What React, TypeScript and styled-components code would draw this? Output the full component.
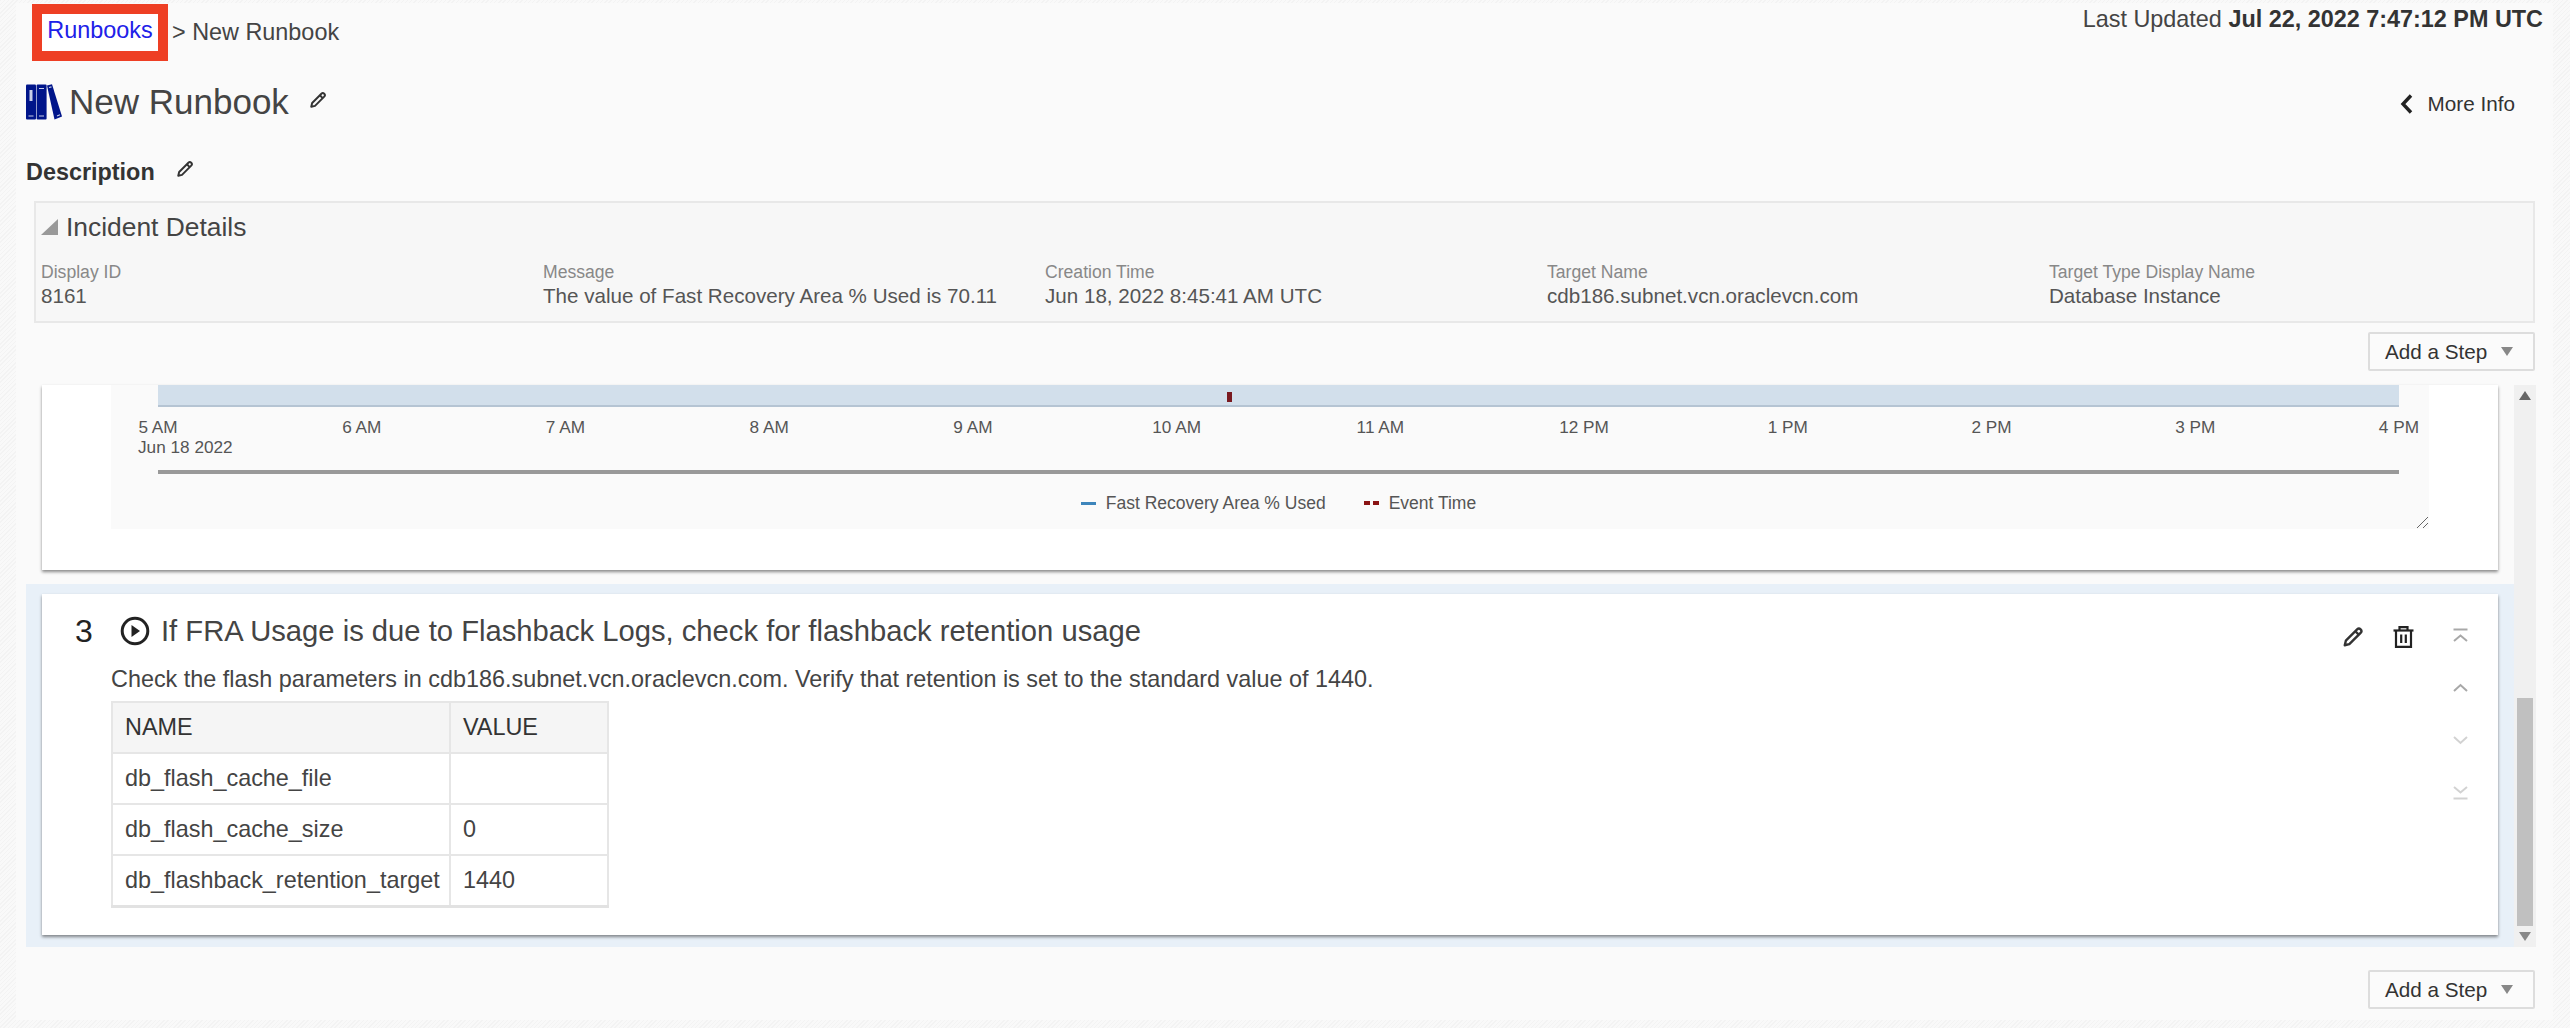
import React from "react";
import styled, { createGlobalStyle } from "styled-components";

const GlobalStyle = createGlobalStyle`
  html, body {
    margin: 0;
    padding: 0;
    background: repeating-linear-gradient(135deg, #f3f3f3 0 1px, #f9f9f9 1px 3px);
    font-family: "Liberation Sans", Arial, sans-serif;
    color: #333;
  }
`;

const Page = styled.div`
  width: 2570px;
  height: 1028px;
  padding: 3px 17px 8px 16px;
  box-sizing: border-box;
  overflow: hidden;
`;

const Frame = styled.div`
  height: 100%;
  box-sizing: border-box;
  background: #fafafa;
  padding: 1px 0 0 10px;
  position: relative;
`;

const TopRow = styled.div`
  display: flex;
  justify-content: space-between;
  align-items: flex-start;
  height: 57px;
  padding-right: 10px;
`;

const Breadcrumb = styled.div`
  display: flex;
  align-items: center;
  height: 57px;
  margin-left: 6px;
  font-size: 23.4px;
  color: #444;
`;

const CrumbBox = styled.div`
  box-sizing: border-box;
  height: 57px;
  width: 136px;
  border: 10px solid #ee3f24;
  background: #fff;
  display: flex;
  align-items: center;
  justify-content: center;
  padding-bottom: 5px;
  margin-right: 4px;
`;

const CrumbLink = styled.a`
  color: #2020e8;
  text-decoration: none;
`;

const Updated = styled.div`
  font-size: 23.4px;
  line-height: 28px;
  margin-top: 1px;
  color: #444;
  b {
    color: #333;
  }
`;

const TitleRow = styled.div`
  display: flex;
  align-items: center;
  justify-content: space-between;
  height: 36px;
  margin-top: 23px;
  padding-right: 38px;
`;

const TitleLeft = styled.div`
  display: flex;
  align-items: center;
`;

const Title = styled.h1`
  margin: 0 0 0 7px;
  font-size: 35px;
  font-weight: 400;
  color: #444;
`;

const TitlePencil = styled.span`
  display: flex;
  margin-left: 20px;
  margin-top: -4px;
`;

const MoreInfo = styled.div`
  display: flex;
  align-items: center;
  gap: 15px;
  margin-top: 4px;
  font-size: 20.7px;
  color: #333;
`;

const DescriptionRow = styled.div`
  display: flex;
  align-items: center;
  height: 30px;
  margin-top: 37px;
`;

const DescriptionLabel = styled.strong`
  font-size: 23.4px;
  color: #333;
`;

const DescriptionPencil = styled.span`
  display: flex;
  margin-left: 21px;
  margin-top: -6px;
`;

const IncidentBox = styled.section`
  box-sizing: border-box;
  height: 122px;
  width: 2501px;
  margin: 14px 0 0 8px;
  background: #f7f7f7;
  border: 2px solid #e8e8e8;
  padding: 0 5px;
`;

const IncidentTitle = styled.div`
  display: flex;
  align-items: center;
  gap: 8px;
  height: 48px;
  font-size: 26.4px;
  color: #444;
`;

const IncidentGrid = styled.div`
  display: grid;
  grid-template-columns: repeat(4, 502px) 1fr;
  margin-top: 10px;
`;

const FieldLabel = styled.div`
  font-size: 17.6px;
  line-height: 23px;
  color: #888;
`;

const FieldValue = styled.div`
  font-size: 20.6px;
  line-height: 23px;
  color: #555;
`;

const ActionRow = styled.div`
  display: flex;
  justify-content: flex-end;
  padding-right: 18px;
  margin-top: ${(p: { $top: number }) => p.$top}px;
`;

const AddButton = styled.button`
  box-sizing: border-box;
  width: 167px;
  height: 39px;
  background: #fbfbfb;
  border: 2px solid #ddd;
  border-radius: 2px;
  font-family: inherit;
  font-size: 20.7px;
  color: #333;
  display: flex;
  align-items: center;
  padding: 0 0 0 15px;
  gap: 14px;
`;

const StepsArea = styled.div`
  display: flex;
  height: 562px;
  margin: 14px 0 0 0;
  width: 2510px;
`;

const StepList = styled.div`
  flex: 1;
  display: flex;
  flex-direction: column;
`;

const ChartSlot = styled.div`
  padding: 0 16px 0 16px;
  margin-bottom: 14px;
`;

const Card = styled.article`
  background: #fff;
  box-shadow: 0 2px 3px rgba(0, 0, 0, 0.45);
  box-sizing: border-box;
`;

const ChartCard = styled(Card)`
  height: 185px;
  padding: 0 69px;
`;

const ChartPanel = styled.div`
  position: relative;
  height: 144px;
  background: #fafafa;
  padding: 0 30px 0 47px;
  color: #555;
`;

const Bar = styled.div`
  position: relative;
  height: 20px;
  background: #d2dfeb;
  border-bottom: 2px solid #b5c4d3;
`;

const EventTick = styled.span`
  position: absolute;
  left: 1069px;
  top: 7px;
  width: 5px;
  height: 10px;
  background: #7a1a20;
`;

const Ticks = styled.div`
  display: flex;
  justify-content: space-between;
  height: 20px;
  margin-top: 10px;
  font-size: 17.2px;
  line-height: 20px;
`;

const Tick = styled.span`
  width: 0;
  display: flex;
  justify-content: center;
  white-space: nowrap;
`;

const DateLabel = styled.div`
  margin-left: -20px;
  font-size: 17.2px;
  line-height: 20px;
`;

const Axis = styled.div`
  height: 4px;
  background: #999;
  margin-top: 13px;
`;

const Legend = styled.div`
  display: flex;
  justify-content: center;
  align-items: center;
  height: 20px;
  margin-top: 19px;
  font-size: 17.5px;
`;

const LegendItem = styled.span`
  display: flex;
  align-items: center;
  gap: 10px;
  margin: 0 19px;
`;

const LegendLine = styled.i`
  width: 15px;
  height: 3px;
  background: #3d85bb;
`;

const LegendDashes = styled.i`
  width: 15px;
  height: 4px;
  background: repeating-linear-gradient(90deg, #8a1414 0 6px, transparent 6px 9px);
`;

const Resize = styled.svg`
  position: absolute;
  right: 0;
  bottom: 0;
`;

const StepBand = styled.div`
  flex: 1;
  background: #e8f0f8;
  padding: 10px 16px 12px 16px;
`;

const StepCard = styled(Card)`
  position: relative;
  height: 341px;
  padding: 0 69px;
`;

const StepHeading = styled.div`
  display: flex;
  align-items: center;
  height: 42px;
  padding-top: 16px;
  margin-left: -36px;
`;

const StepNumber = styled.span`
  font-size: 32px;
  width: 45px;
  color: #222;
`;

const StepTitle = styled.h2`
  margin: 0 0 0 11px;
  font-size: 29.2px;
  font-weight: 400;
  color: #444;
`;

const StepText = styled.p`
  margin: 13px 0 0;
  font-size: 23.4px;
  line-height: 28px;
  color: #444;
`;

const ParamTable = styled.table`
  margin-top: 8px;
  border-collapse: collapse;
  font-size: 23.4px;
  color: #444;
  border-bottom: 3px solid #e2e2e2;
  th,
  td {
    box-sizing: border-box;
    height: 51px;
    padding: 0 8px 0 12px;
    border: 2px solid #e6e6e6;
    text-align: left;
    font-weight: 400;
  }
  th {
    background: #f5f5f5;
    color: #333;
  }
  th:first-child {
    width: 338px;
  }
  th:last-child {
    width: 158px;
  }
`;

const StepTools = styled.div`
  position: absolute;
  top: 32px;
  right: 84px;
  display: flex;
  gap: 29px;
`;

const MoveTools = styled.div`
  position: absolute;
  top: 34px;
  right: 30px;
  display: flex;
  flex-direction: column;
  gap: 38.7px;
`;

const Scrollbar = styled.div`
  width: 22px;
  background: #f0f0f0;
  display: flex;
  flex-direction: column;
  align-items: center;
`;

const ScrollSpace = styled.div`
  flex: 1;
`;

const ScrollThumb = styled.div`
  width: 16px;
  height: 228px;
  background: #c0c0c0;
`;

const ScrollArrow = styled.div`
  height: 21px;
  display: flex;
  align-items: center;
  justify-content: center;
`;

const Caret = ({ up, size = 12, color = "#888" }: { up?: boolean; size?: number; color?: string }) => (
  <svg width={size} height={size * 0.75} viewBox="0 0 12 9">
    <path d={up ? "M0 9L6 0l6 9z" : "M0 0l6 9 6-9z"} fill={color} />
  </svg>
);

const PencilIcon = ({ size = 18, width = 2.6 }: { size?: number; width?: number }) => (
  <svg width={size} height={size} viewBox="0 0 24 24" fill="none" stroke="#333" strokeWidth={width} strokeLinejoin="round">
    <path d="M3 21l1.2-5L16.5 3.7a2.2 2.2 0 0 1 3.8 3.8L8 19.8z" />
    <path d="M14.5 5.7l3.8 3.8" />
  </svg>
);

const TrashIcon = () => (
  <svg width="21" height="22" viewBox="0 0 21 22" fill="none" stroke="#222" strokeWidth="2.2">
    <path d="M0.5 4.5h20" />
    <path d="M6.5 4V1.2h8V4" />
    <path d="M3 5v15.8h15V5" />
    <path d="M8.2 8.5v8.5M12.8 8.5v8.5" />
  </svg>
);

const PlayIcon = () => (
  <svg width="30" height="30" viewBox="0 0 30 30">
    <circle cx="15" cy="15" r="12.8" fill="none" stroke="#222" strokeWidth="3" />
    <path d="M11.5 9L20 15l-8.5 6z" fill="#222" />
  </svg>
);

const BooksIcon = () => (
  <svg width="36" height="36" viewBox="0 0 36 36">
    <rect x="0" y="0.5" width="10" height="35" rx="1" fill="#00158a" />
    <rect x="10.6" y="0.5" width="10" height="35" rx="1" fill="#00158a" />
    <path d="M21 1.5l5-1.3L36 32.5l-7.5 3z" fill="#00158a" />
    <rect x="3.5" y="6" width="3" height="11" fill="#c9cfe8" />
    <path d="M2.5 32h5M13 32h5M13 4.5h5M23 3.5l2.5-.7M31 32l3-1.2" stroke="#c9cfe8" strokeWidth="1.2" />
  </svg>
);

type MoveKind = "top" | "up" | "down" | "bottom";

const MoveIcon = ({ kind }: { kind: MoveKind }) => {
  const faded = kind === "down" || kind === "bottom";
  const chevron = {
    top: "M1 13l6.5-5.5L14 13",
    up: "M1 10l6.5-6L14 10",
    down: "M1 4l6.5 6L14 4",
    bottom: "M1 1l6.5 5.5L14 1",
  }[kind];
  return (
    <svg width="15" height="14" viewBox="0 0 15 14" fill="none" stroke={faded ? "#d2d2d2" : "#a8a8a8"} strokeWidth="2">
      <path d={chevron} />
      {kind === "top" && <path d="M0.5 1.5h14" />}
      {kind === "bottom" && <path d="M0.5 12.5h14" />}
    </svg>
  );
};

const fields = [
  ["Display ID", "8161"],
  ["Message", "The value of Fast Recovery Area % Used is 70.11"],
  ["Creation Time", "Jun 18, 2022 8:45:41 AM UTC"],
  ["Target Name", "cdb186.subnet.vcn.oraclevcn.com"],
  ["Target Type Display Name", "Database Instance"],
];

const hours = ["5 AM", "6 AM", "7 AM", "8 AM", "9 AM", "10 AM", "11 AM", "12 PM", "1 PM", "2 PM", "3 PM", "4 PM"];

const params = [
  ["db_flash_cache_file", ""],
  ["db_flash_cache_size", "0"],
  ["db_flashback_retention_target", "1440"],
];

const AddStep = () => (
  <AddButton>
    Add a Step
    <Caret />
  </AddButton>
);

const App = () => {
  return (
    <Page>
      <GlobalStyle />
      <Frame>
        <TopRow>
          <Breadcrumb>
            <CrumbBox>
              <CrumbLink href="#">Runbooks</CrumbLink>
            </CrumbBox>
            &gt; New Runbook
          </Breadcrumb>
          <Updated>
            Last Updated <b>Jul 22, 2022 7:47:12 PM UTC</b>
          </Updated>
        </TopRow>

        <TitleRow>
          <TitleLeft>
            <BooksIcon />
            <Title>New Runbook</Title>
            <TitlePencil>
              <PencilIcon />
            </TitlePencil>
          </TitleLeft>
          <MoreInfo>
            <svg width="13" height="20" viewBox="0 0 13 20" fill="none" stroke="#222" strokeWidth="3.4">
              <path d="M11 1.5L3 10l8 8.5" />
            </svg>
            More Info
          </MoreInfo>
        </TitleRow>

        <DescriptionRow>
          <DescriptionLabel>Description</DescriptionLabel>
          <DescriptionPencil>
            <PencilIcon />
          </DescriptionPencil>
        </DescriptionRow>

        <IncidentBox>
          <IncidentTitle>
            <svg width="17" height="16" viewBox="0 0 17 16">
              <path d="M0 16L17 0v16z" fill="#999" />
            </svg>
            Incident Details
          </IncidentTitle>
          <IncidentGrid>
            {fields.map(([label, value]) => (
              <div key={label}>
                <FieldLabel>{label}</FieldLabel>
                <FieldValue>{value}</FieldValue>
              </div>
            ))}
          </IncidentGrid>
        </IncidentBox>

        <ActionRow $top={9}>
          <AddStep />
        </ActionRow>

        <StepsArea>
          <StepList>
            <ChartSlot>
              <ChartCard>
                <ChartPanel>
                  <Bar>
                    <EventTick />
                  </Bar>
                  <Ticks>
                    {hours.map((h) => (
                      <Tick key={h}>{h}</Tick>
                    ))}
                  </Ticks>
                  <DateLabel>Jun 18 2022</DateLabel>
                  <Axis />
                  <Legend>
                    <LegendItem>
                      <LegendLine />
                      Fast Recovery Area % Used
                    </LegendItem>
                    <LegendItem>
                      <LegendDashes />
                      Event Time
                    </LegendItem>
                  </Legend>
                  <Resize width="12" height="12" viewBox="0 0 12 12" fill="none" stroke="#666" strokeWidth="1">
                    <path d="M0 11L11 0M6 11l5-5" />
                  </Resize>
                </ChartPanel>
              </ChartCard>
            </ChartSlot>

            <StepBand>
              <StepCard>
                <StepHeading>
                  <StepNumber>3</StepNumber>
                  <PlayIcon />
                  <StepTitle>If FRA Usage is due to Flashback Logs, check for flashback retention usage</StepTitle>
                </StepHeading>
                <StepText>
                  Check the flash parameters in cdb186.subnet.vcn.oraclevcn.com. Verify that retention is set to the
                  standard value of 1440.
                </StepText>
                <ParamTable>
                  <thead>
                    <tr>
                      <th>NAME</th>
                      <th>VALUE</th>
                    </tr>
                  </thead>
                  <tbody>
                    {params.map(([name, value]) => (
                      <tr key={name}>
                        <td>{name}</td>
                        <td>{value}</td>
                      </tr>
                    ))}
                  </tbody>
                </ParamTable>
                <StepTools>
                  <PencilIcon size={22} />
                  <TrashIcon />
                </StepTools>
                <MoveTools>
                  <MoveIcon kind="top" />
                  <MoveIcon kind="up" />
                  <MoveIcon kind="down" />
                  <MoveIcon kind="bottom" />
                </MoveTools>
              </StepCard>
            </StepBand>
          </StepList>

          <Scrollbar>
            <ScrollArrow>
              <Caret up size={12} color="#666" />
            </ScrollArrow>
            <ScrollSpace />
            <ScrollThumb />
            <ScrollArrow>
              <Caret size={12} color="#888" />
            </ScrollArrow>
          </Scrollbar>
        </StepsArea>

        <ActionRow $top={23}>
          <AddStep />
        </ActionRow>
      </Frame>
    </Page>
  );
};

export default App;
